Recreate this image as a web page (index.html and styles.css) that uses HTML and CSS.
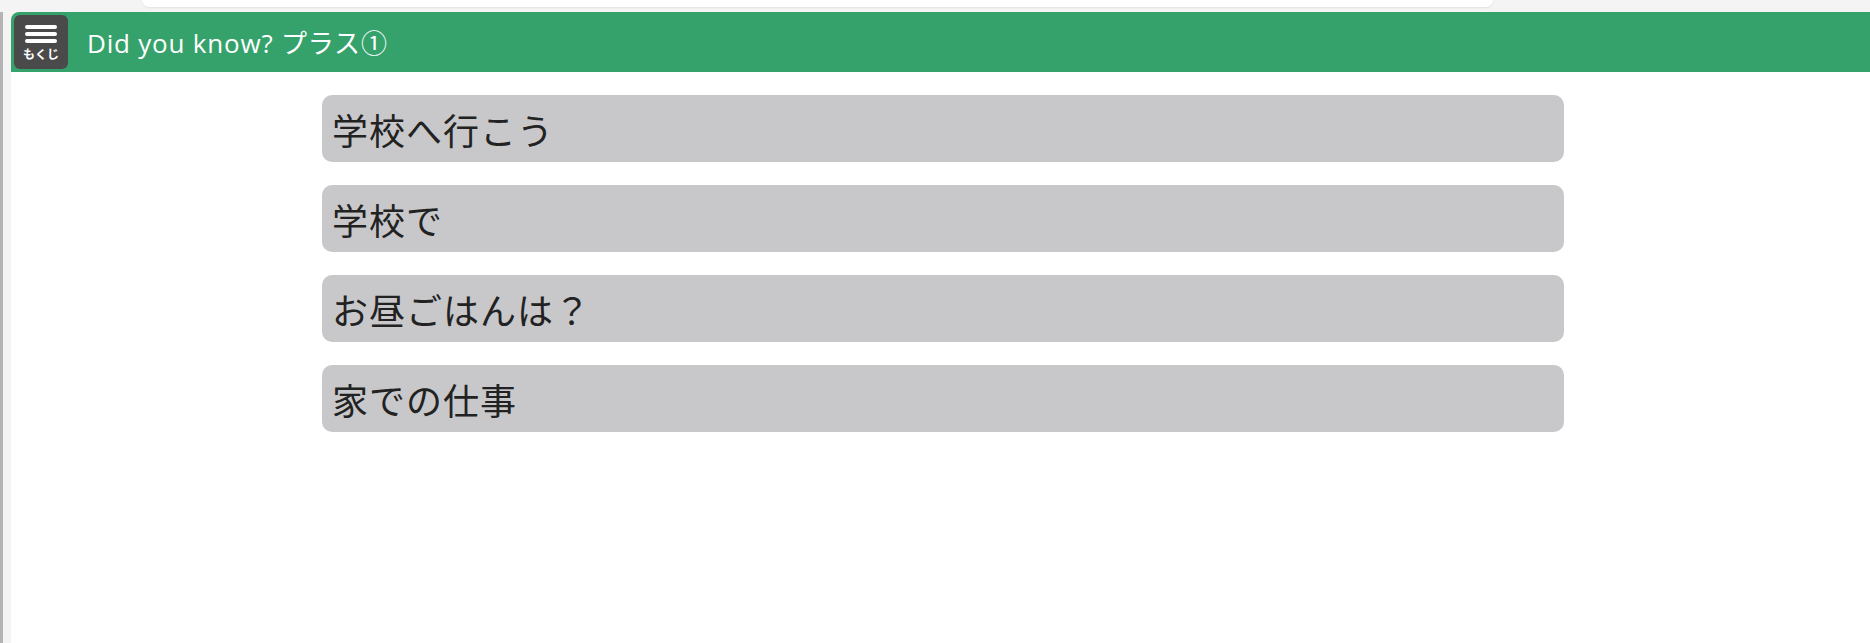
FILE: index.html
```html
<!DOCTYPE html>
<html lang="ja">
<head>
    <meta charset="UTF-8">
    <meta name="viewport" content="width=device-width, initial-scale=1.0">
    <title>Did you know? プラス①</title>
    <link rel="stylesheet" href="styles.css">
</head>
<body>
    <!-- Bande du haut (barre d'onglets) -->
    <div class="top-strip">
        <div class="tab-bar"></div>
    </div>

    <div class="frame">
        <div class="side-rail"></div>

        <main class="page">
            <header class="title-bar">
                <button class="menu-btn">
                    <span class="bars">
                        <span></span>
                        <span></span>
                        <span></span>
                    </span>
                    <span class="menu-label">もくじ</span>
                </button>
                <h1 class="title">Did you know? プラス①</h1>
            </header>

            <section class="lessons">
                <div class="lesson">学校へ行こう</div>
                <div class="lesson">学校で</div>
                <div class="lesson">お昼ごはんは？</div>
                <div class="lesson">家での仕事</div>
            </section>
        </main>
    </div>
</body>
</html>
```

FILE: styles.css
```css
/* Style global */
html, body {
    height: 100%;
}

body {
    margin: 0;
    padding: 0;
    background-color: #f4f4f4;
    font-family: "Noto Sans CJK JP", "Noto Sans", sans-serif;
    display: flex;
    flex-direction: column;
    overflow: hidden;
}

.top-strip {
    height: 12px;
    flex-shrink: 0;
    padding-left: 142px;
    padding-right: 377px;
}

.tab-bar {
    height: 7px;
    background-color: white;
    border-radius: 0 0 12px 12px;
    box-shadow: 0 1px 2px rgba(0, 0, 0, 0.08);
}

.frame {
    flex: 1;
    display: flex;
}

.side-rail {
    width: 3px;
    margin-right: 8px;
    background-color: #b4b4b4;
    flex-shrink: 0;
}

.page {
    flex: 1;
    background-color: white;
    border-top-left-radius: 8px;
    overflow: hidden;
}

.title-bar {
    height: 60px;
    background-color: #36a26b;
    display: flex;
    align-items: center;
    padding-left: 3px;
}

.menu-btn {
    width: 54px;
    height: 54px;
    border: none;
    border-radius: 6px;
    background-color: #4a4a4a;
    color: white;
    padding: 0;
    display: flex;
    flex-direction: column;
    align-items: center;
    cursor: pointer;
}

.bars {
    display: flex;
    flex-direction: column;
    gap: 3px;
    margin-top: 10px;
}

.bars span {
    display: block;
    width: 32px;
    height: 4px;
    border-radius: 2px;
    background-color: white;
}

.menu-label {
    font-family: "Noto Sans CJK JP", sans-serif;
    font-size: 12px;
    font-weight: bold;
    line-height: 1;
    margin-top: 5px;
}

.title {
    margin: 0 0 0 19px;
    color: white;
    font-family: "Open Sans", "Noto Sans CJK JP", sans-serif;
    font-size: 26px;
    font-weight: normal;
    letter-spacing: 0.8px;
}

.lessons {
    width: 1242px;
    margin: 23px auto 0;
    padding-left: 5px;
    display: flex;
    flex-direction: column;
    gap: 23px;
}

.lesson {
    height: 67px;
    background-color: #c8c8ca;
    border-radius: 10px;
    display: flex;
    align-items: center;
    padding-left: 10px;
    font-size: 36px;
    letter-spacing: 1px;
    color: #222;
}
```
